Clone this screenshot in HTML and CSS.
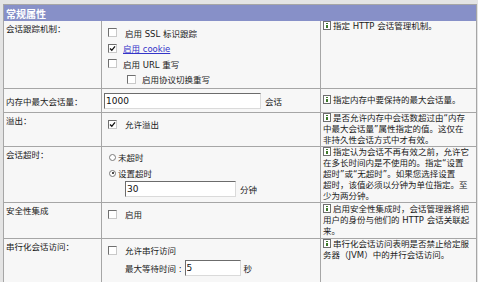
FILE: index.html
```html
<!DOCTYPE html>
<html lang="zh-CN">
<head>
    <meta charset="UTF-8">
    <title>常规属性</title>
    <link rel="stylesheet" href="styles.css">
</head>
<body>
    <table class="props">
        <colgroup>
            <col class="c-label">
            <col class="c-ctrl">
            <col class="c-desc">
        </colgroup>
        <tr class="head">
            <th colspan="3">常规属性</th>
        </tr>

        <!-- 会话跟踪 -->
        <tr class="row-track">
            <td class="label">会话跟踪机制：</td>
            <td class="ctrl">
                <div class="opt"><span class="chk"></span><span class="wide">启用 SSL 标识跟踪</span></div>
                <div class="opt"><span class="chk"><svg width="7" height="7" viewBox="0 0 7 7"><path d="M1 3.5 L2.8 5.3 L6 1.3" fill="none" stroke="#111" stroke-width="1.3"/></svg></span><a href="#" class="link">启用 cookie</a></div>
                <div class="opt"><span class="chk"></span>启用 URL 重写</div>
                <div class="opt sub"><span class="chk"></span>启用协议切换重写</div>
            </td>
            <td class="desc"><svg class="info" width="8" height="9" viewBox="0 0 8 9"><rect x="0.5" y="0.5" width="7" height="8" fill="#fff" stroke="#6e6e6e"/><rect x="3" y="2" width="2" height="1" fill="#3d7a2a"/><rect x="3" y="4" width="2" height="3" fill="#3d7a2a"/></svg>指定 HTTP 会话管理机制。</td>
        </tr>

        <!-- 最大会话量 -->
        <tr class="row-max">
            <td class="label">内存中最大会话量：</td>
            <td class="ctrl">
                <div class="field"><input type="text" class="txt w-max" value="1000"><span>会话</span></div>
            </td>
            <td class="desc"><svg class="info" width="8" height="9" viewBox="0 0 8 9"><rect x="0.5" y="0.5" width="7" height="8" fill="#fff" stroke="#6e6e6e"/><rect x="3" y="2" width="2" height="1" fill="#3d7a2a"/><rect x="3" y="4" width="2" height="3" fill="#3d7a2a"/></svg>指定内存中要保持的最大会话量。</td>
        </tr>

        <!-- 溢出 -->
        <tr class="row-overflow">
            <td class="label">溢出：</td>
            <td class="ctrl">
                <div class="opt"><span class="chk"><svg width="7" height="7" viewBox="0 0 7 7"><path d="M1 3.5 L2.8 5.3 L6 1.3" fill="none" stroke="#111" stroke-width="1.3"/></svg></span><span class="wide">允许溢出</span></div>
            </td>
            <td class="desc"><svg class="info" width="8" height="9" viewBox="0 0 8 9"><rect x="0.5" y="0.5" width="7" height="8" fill="#fff" stroke="#6e6e6e"/><rect x="3" y="2" width="2" height="1" fill="#3d7a2a"/><rect x="3" y="4" width="2" height="3" fill="#3d7a2a"/></svg>是否允许内存中会话数超过由“内存<br>中最大会话量”属性指定的值。这仅在<br>非持久性会话方式中才有效。</td>
        </tr>

        <!-- 会话超时 -->
        <tr class="row-timeout">
            <td class="label">会话超时：</td>
            <td class="ctrl">
                <div class="opt radio-opt"><span class="radio"></span>未超时</div>
                <div class="opt radio-opt"><span class="radio on"></span>设置超时</div>
                <div class="field indent"><input type="text" class="txt w-timeout" value="30"><span>分钟</span></div>
            </td>
            <td class="desc"><svg class="info" width="8" height="9" viewBox="0 0 8 9"><rect x="0.5" y="0.5" width="7" height="8" fill="#fff" stroke="#6e6e6e"/><rect x="3" y="2" width="2" height="1" fill="#3d7a2a"/><rect x="3" y="4" width="2" height="3" fill="#3d7a2a"/></svg>指定认为会话不再有效之前，允许它<br>在多长时间内是不使用的。指定“设置<br>超时”或“无超时”。如果您选择设置<br>超时，该值必须以分钟为单位指定。至<br>少为两分钟。</td>
        </tr>

        <!-- 安全性集成 -->
        <tr class="row-security">
            <td class="label">安全性集成</td>
            <td class="ctrl">
                <div class="opt"><span class="chk"></span><span class="wide">启用</span></div>
            </td>
            <td class="desc"><svg class="info" width="8" height="9" viewBox="0 0 8 9"><rect x="0.5" y="0.5" width="7" height="8" fill="#fff" stroke="#6e6e6e"/><rect x="3" y="2" width="2" height="1" fill="#3d7a2a"/><rect x="3" y="4" width="2" height="3" fill="#3d7a2a"/></svg>启用安全性集成时，会话管理器将把<br>用户的身份与他们的 HTTP 会话关联起<br>来。</td>
        </tr>

        <!-- 串行化访问 -->
        <tr class="row-serial">
            <td class="label">串行化会话访问：</td>
            <td class="ctrl">
                <div class="opt"><span class="chk"></span><span class="wide">允许串行访问</span></div>
                <div class="field indent wait"><span>最大等待时间 :</span><input type="text" class="txt w-wait" value="5"><span>秒</span></div>
            </td>
            <td class="desc"><svg class="info" width="8" height="9" viewBox="0 0 8 9"><rect x="0.5" y="0.5" width="7" height="8" fill="#fff" stroke="#6e6e6e"/><rect x="3" y="2" width="2" height="1" fill="#3d7a2a"/><rect x="3" y="4" width="2" height="3" fill="#3d7a2a"/></svg>串行化会话访问表明是否禁止给定服<br>务器（JVM）中的并行会话访问。</td>
        </tr>
    </table>
</body>
</html>
```

FILE: styles.css
```css
/* 常规属性面板 */
body {
    margin: 0;
    padding: 4px 0 0 3px;
    background: #e4e4e4;
    font-family: "DejaVu Sans", "Noto Sans CJK SC", sans-serif;
    font-size: 8.5px;
    color: #1a1a1a;
}

.props {
    width: 473px;
    table-layout: fixed;
    border-collapse: separate;
    border-spacing: 0;
    border-top: 1px solid #a6a6a6;
    border-left: 1px solid #a6a6a6;
    background: #f7f7f7;
}

.c-label { width: 98px; }
.c-ctrl { width: 219px; }
.c-desc { width: 156px; }

.head th {
    height: 16px;
    padding: 0 2px;
    background: #8790c8;
    color: #fff;
    font-size: 10px;
    font-weight: bold;
    text-align: left;
    border-right: 1px solid #a6a6a6;
    box-sizing: border-box;
}

.props td {
    box-sizing: border-box;
    vertical-align: top;
    border-right: 1px solid #a6a6a6;
    border-bottom: 1px solid #a6a6a6;
    padding: 0;
}

.row-track { height: 68px; }
.row-max { height: 24px; }
.row-overflow { height: 34px; }
.row-timeout { height: 56px; }
.row-security { height: 36px; }
.row-serial { height: 50px; }

.row-max td {
    vertical-align: middle;
}

.label {
    padding: 3px 2px 0 2px !important;
    line-height: 11px;
    white-space: nowrap;
}

.ctrl {
    padding: 3px 2px 0 2px !important;
}

.row-track .ctrl {
    padding-top: 4px !important;
}

.row-max .ctrl {
    padding-top: 0 !important;
}

.row-timeout .ctrl {
    padding-top: 2px !important;
}

.desc {
    padding: 0 2px !important;
    line-height: 11px;
    white-space: nowrap;
}

.row-security .desc {
    padding-top: 1px !important;
}

.info {
    vertical-align: -1px;
    margin-right: 2px;
}

/* 复选框与单选按钮 */
.opt {
    display: flex;
    align-items: center;
    height: 16px;
    margin-left: 4px;
    gap: 6px;
}

.row-track .opt {
    height: 15.5px;
}

.opt.sub {
    margin-left: 23px;
}

.opt .wide {
    margin-left: 2px;
}

.chk {
    width: 9px;
    height: 9px;
    box-sizing: border-box;
    border: 1px solid;
    border-color: #6f6f6f #c9c9c9 #c9c9c9 #6f6f6f;
    background: #fff;
    display: flex;
    align-items: center;
    justify-content: center;
    flex: none;
}

.radio-opt {
    margin-left: 5px;
    gap: 2px;
}

.radio {
    width: 7px;
    height: 7px;
    box-sizing: border-box;
    border: 1px solid #7a7a7a;
    border-radius: 50%;
    background: #fff;
    position: relative;
    flex: none;
}

.radio.on::after {
    content: "";
    position: absolute;
    left: 1.5px;
    top: 1.5px;
    width: 2px;
    height: 2px;
    border-radius: 50%;
    background: #111;
}

.link {
    color: #3434c8;
    text-decoration: underline;
}

/* 文本框 */
.field {
    display: flex;
    align-items: flex-end;
    gap: 4px;
}

.field span {
    line-height: 11px;
    padding-bottom: 1px;
}

.field.indent {
    margin-left: 21px;
}

.field.wait {
    margin-top: 2px;
    gap: 3px;
}

.txt {
    height: 16px;
    box-sizing: border-box;
    margin: 0;
    padding: 0 1px;
    border: 1px solid;
    border-color: #6c6c6c #dadada #dadada #6c6c6c;
    background: #fff;
    font-family: "DejaVu Sans", sans-serif;
    font-size: 9px;
    color: #111;
    outline: none;
}

.w-max { width: 157px; }
.w-timeout { width: 111px; }
.w-wait { width: 56px; }
```
